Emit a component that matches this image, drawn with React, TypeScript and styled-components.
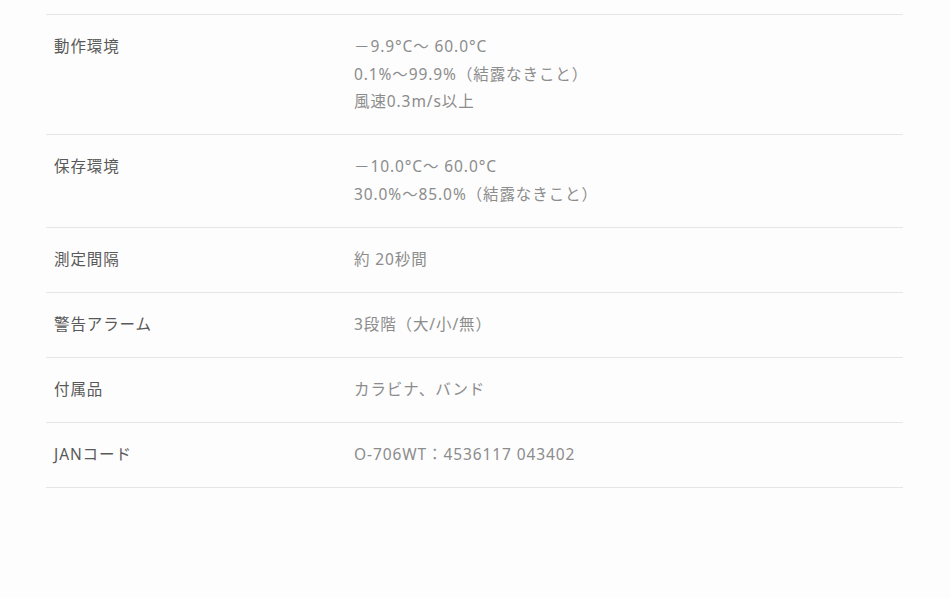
import styled, { createGlobalStyle } from 'styled-components';

const GlobalStyle = createGlobalStyle`
  html, body {
    margin: 0;
    padding: 0;
    background: #fdfdfd;
  }
  body {
    font-family: 'Noto Sans', 'Noto Sans CJK JP', sans-serif;
  }
`;

const Page = styled.div`
  width: 950px;
  height: 598px;
  padding: 14px 47px 0 46px;
  box-sizing: border-box;
  overflow: hidden;
`;

const SpecTable = styled.dl`
  margin: 0;
  border-top: 1px solid #e6e6e6;
`;

const Row = styled.div`
  display: grid;
  grid-template-columns: 300px 1fr;
  padding: 18px 0 18.5px 8px;
  border-bottom: 1px solid #e6e6e6;
  font-size: 15.5px;
  line-height: 27.5px;
  letter-spacing: 0.9px;
`;

const Label = styled.dt`
  margin: 0;
  color: #595959;
`;

const Value = styled.dd`
  margin: 0;
  color: #8c8c8c;
`;

const Line = styled.span`
  display: block;
`;

const specs: { label: string; lines: string[] }[] = [
  {
    label: '動作環境',
    lines: ['－9.9°C～ 60.0°C', '0.1%～99.9%（結露なきこと）', '風速0.3m/s以上'],
  },
  {
    label: '保存環境',
    lines: ['－10.0°C～ 60.0°C', '30.0%～85.0%（結露なきこと）'],
  },
  { label: '測定間隔', lines: ['約 20秒間'] },
  { label: '警告アラーム', lines: ['3段階（大/小/無）'] },
  { label: '付属品', lines: ['カラビナ、バンド'] },
  { label: 'JANコード', lines: ['O-706WT：4536117 043402'] },
];

const App = () => {
  return (
    <>
      <GlobalStyle />
      <Page>
        <SpecTable>
          {specs.map((spec) => (
            <Row key={spec.label}>
              <Label>{spec.label}</Label>
              <Value>
                {spec.lines.map((line) => (
                  <Line key={line}>{line}</Line>
                ))}
              </Value>
            </Row>
          ))}
        </SpecTable>
      </Page>
    </>
  );
};

export default App;
